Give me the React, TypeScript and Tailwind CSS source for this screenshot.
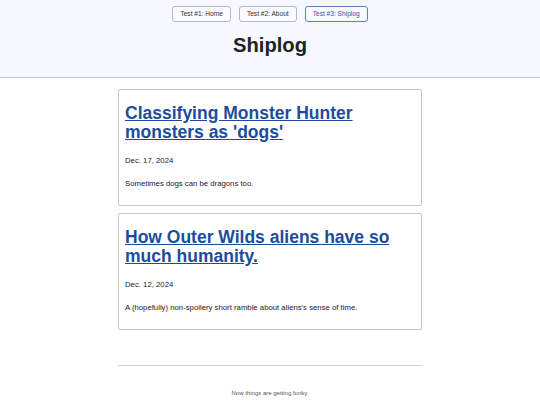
const NAV = [
  { label: "Test #1: Home", active: false },
  { label: "Test #2: About", active: false },
  { label: "Test #3: Shiplog", active: true },
];

const POSTS = [
  {
    title: "Classifying Monster Hunter monsters as 'dogs'",
    date: "Dec. 17, 2024",
    blurb: "Sometimes dogs can be dragons too.",
  },
  {
    title: "How Outer Wilds aliens have so much humanity.",
    date: "Dec. 12, 2024",
    blurb: "A (hopefully) non-spoilery short ramble about aliens's sense of time.",
  },
];

export default function App() {
  return (
    <div className="min-h-[405px] bg-white text-[#222] font-['Liberation_Sans',Arial,sans-serif]">
      {/* Header */}
      <header className="bg-[#f5f8ff] border-b border-[#c9cbd3] pt-[6px] pb-[20px]">
        <nav className="flex justify-center gap-[8px]">
          {NAV.map((n) => (
            <button
              key={n.label}
              className={`h-[16px] px-[7px] rounded-[3px] border bg-[#fafbfe] text-[6.6px] leading-[14px] ${
                n.active
                  ? "border-[#5f80bd] text-[#2b57a3]"
                  : "border-[#b5b9c2] text-[#333]"
              }`}
            >
              {n.label}
            </button>
          ))}
        </nav>
        <h1 className="mt-[12px] text-center text-[20.2px] leading-[23px] font-bold text-[#222]">
          Shiplog
        </h1>
      </header>

      {/* Posts */}
      <main className="w-[304px] mx-auto mt-[11px] flex flex-col gap-[7px]">
        {POSTS.map((p) => (
          <article
            key={p.title}
            className="border border-[#c6c6c6] rounded-[2px] px-[6px] pt-[14px] pb-[17px]"
          >
            <h2 className="text-[17.5px] leading-[19px] font-bold">
              <a href="#" className="text-[#1d4c9c] underline">
                {p.title}
              </a>
            </h2>
            <p className="mt-[14px] text-[7.75px] leading-[9px]">{p.date}</p>
            <p className="mt-[14px] text-[7.75px] leading-[9px]">{p.blurb}</p>
          </article>
        ))}
      </main>

      {/* Footer */}
      <footer className="w-[304px] mx-auto mt-[35px]">
        <hr className="border-t border-[#cfcfd4]" />
        <p className="mt-[23px] text-center text-[6px] leading-[8px] text-[#555]">
          Now things are getting funky.
        </p>
      </footer>
    </div>
  );
}
